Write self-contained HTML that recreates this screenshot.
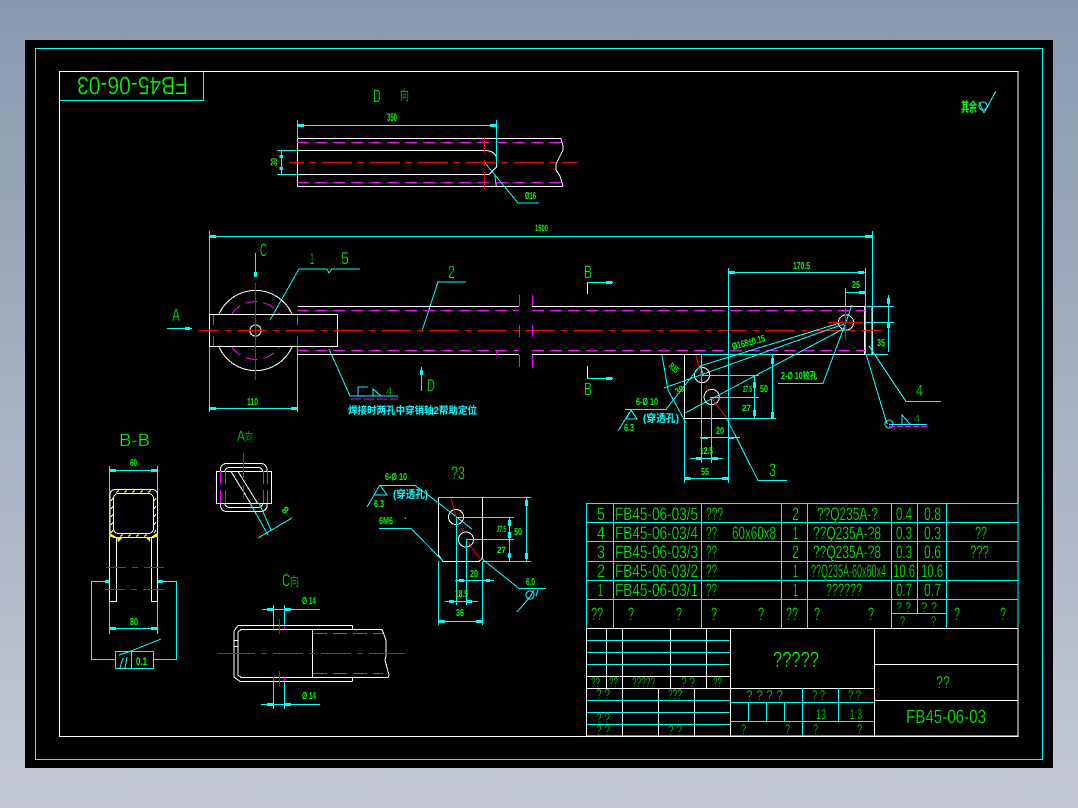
<!DOCTYPE html>
<html>
<head>
<meta charset="utf-8">
<style>
html,body{margin:0;padding:0;width:1078px;height:808px;overflow:hidden;background:#a8b1c1}
svg{display:block;position:absolute;left:0;top:0}
text{font-family:"Liberation Sans","Noto Sans CJK SC",sans-serif;fill:#00ff00;text-rendering:geometricPrecision;stroke:#000;stroke-width:.35}
.b{font-weight:bold;stroke:none}
.c{fill:#00ffff;font-weight:bold;stroke:none}
</style>
</head>
<body>
<svg width="1078" height="808" viewBox="0 0 1078 808" xmlns="http://www.w3.org/2000/svg">
<defs>
<linearGradient id="bg" x1="0" y1="0" x2="0" y2="1">
<stop offset="0" stop-color="#8a98ae"/>
<stop offset="1" stop-color="#c4c9d3"/>
</linearGradient>
</defs>
<rect width="1078" height="808" fill="url(#bg)"/>
<rect x="25" y="40" width="1028" height="728" fill="#000"/>

<g fill="none" shape-rendering="crispEdges" stroke-width="1">
<!-- frames -->
<rect x="35.5" y="48.5" width="1007" height="711" stroke="#00ffff"/>
<rect x="59.5" y="71.5" width="958.5" height="665" stroke="#fff"/>
<path d="M59.5 100.5H203.5V71.5" stroke="#00ffff"/>

<!-- D view -->
<g stroke="#fff">
<path d="M297.5 138.5H561M297.5 186.5H563M297.5 138.5V186.5M297.5 150.5H485Q496 151 496.5 159M297.5 174.5H489L496.5 167V159"/>
<path d="M561 138.5L563 146V150L560 156L556 164L556 170L560 176L563 186"/>
</g>
<path d="M297 142.5H563M297 182.5H563" stroke="#ff00ff" stroke-dasharray="12 6"/>
<path d="M496.5 182V186" stroke="#ff00ff"/>
<path d="M289 162.5H578" stroke="#ff0000" stroke-dasharray="30 6 6 6" stroke-dashoffset="15"/>
<path d="M484.5 137V153M484.5 160V166M484.5 172V189" stroke="#ff0000"/>
<g stroke="#00ffff">
<path d="M297.5 120V139M496.5 120V165M297 125.5H496.5M277 150.5H297M277 174.5H297M281.5 150V175M485 163L518 203H539M495 176L496 186"/>
</g>

<!-- main view -->
<g stroke="#00ffff">
<path d="M209.5 231V412M872.5 231V355M209.5 236.5H872.5M297.5 347V412M209.5 408.5H297M167 328.5H192M255.5 253V277M421.5 367V391"/>
<path d="M270 320L299 269H327L329 273L332 269H360M422 331L438 282H466M329 349L350 396H398"/>
<path d="M358 396V387H368M373 396L373 389L381 396"/>
</g>
<path d="M351 399H398" stroke="#ff00ff" stroke-dasharray="10 3"/>
<g stroke="#fff">
<rect x="209.5" y="314.5" width="128" height="32"/>
<path d="M297.5 306.5H519M297.5 354.5H519M532 306.5H872M532 354.5H872M864.5 306.5V354.5M872 306.5V354.5"/>
<path d="M219 314A40 40 0 0 1 292 314M219 347A40 40 0 0 0 292 347"/>
<circle cx="255.5" cy="330.5" r="5.6"/>
</g>
<path d="M231.7 314A29 29 0 0 1 279.3 314M231.7 347A29 29 0 0 0 279.3 347" stroke="#ff00ff" stroke-dasharray="12 6"/>
<path d="M213.5 315V325M213.5 336V346M297.5 315V325M297.5 336V346M297 310.5H519M532 310.5H865M297 350.5H519M532 350.5H865" stroke="#ff00ff" stroke-dasharray="12 6"/>
<path d="M519.5 295V306M532.5 295V306M519.5 355V367M532.5 355V367M496.5 350V355" stroke="#ff00ff"/>
<path d="M198 330.5H882" stroke="#ff0000" stroke-dasharray="30 6 6 6" stroke-dashoffset="9"/>
<path d="M255.5 283V380" stroke="#ff0000"/>
<path d="M519.5 325V337M532.5 325V337" stroke="#ff00ff"/>

<!-- right details -->
<g stroke="#fff">
<path d="M587.5 283V294M587.5 366V378M684.5 355V418.5H729"/>
<circle cx="846" cy="322.5" r="7.6"/>
<circle cx="702" cy="375" r="7.6"/>
<circle cx="711.7" cy="397" r="7.6"/>
</g>
<g stroke="#00ffff">
<path d="M587 282.5H613M587 378.5H613M728.5 268V483M728 272.5H865M865.5 268V355M684.5 419V483M684 478.5H728"/>
<path d="M845.5 288V326M845 292.5H865M865 306.5H894M865 322.5H894M888.5 295V352M866 354.5H888"/>
<path d="M843 322L700 366M844 324L664 388M845 328L685 413M700 366L704 376M664 388L669 386"/>
<path d="M662 355L668 390L686 423"/>
<path d="M778 383.5H823L846 322M845 325L852 305"/>
<path d="M869 346L906 401.5H941M866 354L887 424"/>
<circle cx="889" cy="424" r="4"/>
<path d="M889 424.5H927M902 424V415L910 424"/>
<path d="M700 375.5H759M710 397.5H759M728 418.5H776M700 354.5H775M754.5 375V418M772.5 354V418"/>
<path d="M701.5 355V463M711.5 397V463M700 437.5H740M690 458.5H723"/>
<path d="M725 415L758 480.5H787"/>
<path d="M618 431L631 410L637 419H626L631 410M625 409.5H666L700 366"/>
</g>
<path d="M889 426.5H927" stroke="#ff00ff" stroke-dasharray="6 2"/>
<path d="M695.7 355L702.3 378M706.7 385L707.7 392M711.7 398L726.7 418" stroke="#ff0000"/>
<path d="M845.5 307V340M828 322.5H863" stroke="#ff0000"/>

<!-- B-B -->
<g stroke="#00ffff">
<path d="M109.5 466V634M157.5 466V634M109 470.5H157M109 628.5H157"/>
<path d="M109 581.5H91.5V659.5H115M157 581.5H176.5V659.5H153"/>
<rect x="115.5" y="651.5" width="38" height="17"/>
<path d="M131.5 652V668M119 655L131 651L161 639M120 668L123 658M125 668L127 657"/>
</g>
<g stroke="#fff">
<rect x="110" y="489.5" width="47.5" height="48" rx="5"/>
<rect x="113.5" y="493.5" width="40" height="40" rx="5"/>
<path d="M109.5 537V601.5H116.5V537M151.5 537V601.5H157.5V537"/>
</g>
<path d="M116 492.5L119 490.5M124 492.5L127 490.5M132 492.5L135 490.5M140 492.5L143 490.5M148 492.5L151 490.5M111 501L113 498M111 509L113 506M111 517L113 514M111 525L113 522M111 533L113 530M154 501L156 498M154 509L156 506M154 517L156 514M154 525L156 522M154 533L156 530M120 536.5L123 534.5M128 536.5L131 534.5M136 536.5L139 534.5M144 536.5L147 534.5" stroke="#ffff00"/>
<path d="M110 533L116 537H110ZM157 533L151 537H157ZM117 537H123L118 542ZM150 537H145L150 542Z" fill="#ffff00" stroke="none"/>
<path d="M106 567.5H126M132 567.5H138M144 567.5H164M105 589.5H125M131 589.5H137M143 589.5H164" stroke="#ff0000"/>

<!-- A direction -->
<g stroke="#fff">
<rect x="220.5" y="463.5" width="46.5" height="48" rx="6"/>
<rect x="224.5" y="467.5" width="38.5" height="40" rx="5"/>
<rect x="216.5" y="471.5" width="55" height="32" fill="#000"/>
<path d="M231 471.5L251 504M238 471.5L258 504"/>
</g>
<path d="M250 503L268 535M259 503L271 530M258 538L292 518" stroke="#00ffff"/>
<path d="M243.5 453V478M243.5 485V498" stroke="#ff0000"/>
<path d="M220.5 471V484M225.5 471V484M263.5 471V484M267.5 471V484M220.5 490V503M225.5 490V503M263.5 490V503M267.5 490V503" stroke="#ff00ff"/>

<!-- C direction -->
<g stroke="#fff">
<path d="M352.5 625.5V629M352.5 677V681M238 625.5H352.5M234 631L238 625.5M234 631V677L240 681.5H352.5M238 632L241 629.5H382L386 640V656L385 660L389 675L388 677.5H241L238 675V632M234 640.5H238M234 646.5H238M312.5 629.5V677.5"/>
</g>
<path d="M313 633.5H383M313 673.5H383" stroke="#ff00ff" stroke-dasharray="14 6"/>
<path d="M273.5 626V629M284.5 626V629M273.5 677V681M284.5 677V681" stroke="#ff00ff"/>
<path d="M218 653.5H255M261 653.5H267M273 653.5H303M309 653.5H315M321 653.5H351M357 653.5H363M369 653.5H405M279.5 619V634M279.5 671V687" stroke="#ff0000"/>
<g stroke="#00ffff">
<path d="M273.5 605V625M284.5 605V625M273.5 681V709M284.5 681V709M262 609.5H320M261 704.5H320"/>
</g>

<!-- detail 3 -->
<g stroke="#fff">
<path d="M438.5 497V555L443 561.5H479L482.5 558V497"/>
<circle cx="456" cy="517" r="7.5"/>
<circle cx="466" cy="539.5" r="7.5"/>
</g>
<g stroke="#00ffff">
<path d="M438 497.5H531M482 561.5H531M526.5 497V561M456 517.5H514M466 539.5H514M509.5 517V561"/>
<path d="M456.5 517V605M466.5 539V605M455 580.5H494M445 601.5H478M438.5 561V625M482.5 561V625M438 621.5H482"/>
<path d="M367 507L380 485L387 495H374L380 485M380 485.5H415L432 498L472 529"/>
<path d="M379 528.5H411L443 561M481 558L519 588.5H546M534 590L530 597L517 612M538 590L536 596"/>
<circle cx="530" cy="595" r="4"/>
</g>
<path d="M451 498L456 517M461 528L463 532M467 541L481 560" stroke="#ff0000"/>

<!-- arrow blobs -->
<g fill="#00ffff" stroke="none">
<path d="M297 124H304V127H297ZM490 124H496V127H490ZM279.5 155H283V158H279.5ZM279.5 167H283V170H279.5Z"/>
<path d="M210 235H216V238H210ZM291 407H297V410H291ZM210 407H216V410H210ZM185 327H190V330H185ZM254 272H257V277H254ZM420 370H423V375H420ZM865 235H872V238H865Z"/>
<path d="M606 281H612V284H606ZM606 377H612V380H606ZM729 271H735V274H729ZM858 271H864V274H858ZM859 291H865V294H859ZM887 298H890V304H887ZM887 322H890V328H887Z"/>
<path d="M753 382H756V388H753ZM753 410H756V416H753ZM771 358H774V364H771ZM771 412H774V418H771ZM702 437H708V439H702ZM728 437H734V439H728ZM685 477H691V480H685ZM722 477H728V480H722ZM696 457H702V460H696ZM712 457H718V460H712Z"/>
<path d="M110 469H116V472H110ZM151 469H157V472H151ZM110 627H116V630H110ZM151 627H157V630H151ZM105 580H109V583H105ZM158 580H163V583H158Z"/>
<path d="M267 608H273V611H267ZM285 608H291V611H285ZM267 703H273V706H267ZM285 703H291V706H285Z"/>
<path d="M525 500H528V506H525ZM525 553H528V559H525ZM508 520H511V526H508ZM508 532H511V538H508ZM508 553H511V558H508ZM459 579H464V582H459ZM486 579H490V582H486ZM449 600H454V603H449ZM467 600H472V603H467ZM439 620H445V623H439ZM476 620H482V623H476Z"/>
</g>

<!-- parts table -->
<g stroke="#00ffff">
<path d="M586.5 503.5H1018M586.5 522.5H1018M586.5 541.5H1018M586.5 561.5H1018M586.5 580.5H1018M586.5 599.5H1018M891 613.5H946"/>
<path d="M586.5 503V628M613.5 503V628M701.5 503V628M781.5 503V628M807.5 503V628M891.5 503V628M917.5 503V613M946.5 503V628M1018 503V628"/>
</g>
<!-- title block -->
<g stroke="#fff">
<path d="M586.5 628.5H1018M586.5 688.5H874M586.5 676.5H730M586.5 736H1018M874 664.5H1018M874 700.5H1018"/>
<path d="M586.5 628V736M606.5 628V688M622.5 628V736M670.5 628V688M706.5 628V688M730.5 628V736M658.5 688V736M694.5 688V736M874.5 628V736M1018 628V736"/>
</g>
<g stroke="#00ffff">
<path d="M586.5 640.5H730M586.5 652.5H730M586.5 664.5H730M586.5 700.5H730M586.5 712.5H730M586.5 724.5H730M730 702.5H874M730 721.5H874"/>
<path d="M802.5 688V736M838.5 688V721M748.5 702V721M766.5 702V721M784.5 702V721"/>
</g>
</g>

<!-- check mark -->
<g fill="none" stroke="#00ffff" shape-rendering="crispEdges">
<circle cx="983" cy="106" r="4"/>
<path d="M984 113L996 91M979 102L984 113"/>
</g>

<!-- text -->
<text x="77" y="95" font-size="25" textLength="111" lengthAdjust="spacingAndGlyphs" transform="rotate(180 132.5 86)">FB45-06-03</text>
<text x="373" y="102" font-size="18" textLength="8" lengthAdjust="spacingAndGlyphs">D</text>
<text x="400" y="100" font-size="14" textLength="9" lengthAdjust="spacingAndGlyphs">向</text>
<text class="b" x="387" y="121" font-size="11" textLength="10" lengthAdjust="spacingAndGlyphs">350</text>
<text class="b" x="0" y="0" font-size="9" textLength="8" lengthAdjust="spacingAndGlyphs" transform="translate(277 166) rotate(-90)">30</text>
<text class="b" x="525" y="199" font-size="10" textLength="11" lengthAdjust="spacingAndGlyphs">Ø16</text>
<text class="b" x="961" y="112" font-size="14" textLength="16" lengthAdjust="spacingAndGlyphs">其余</text>

<text class="b" x="535" y="231" font-size="9" textLength="13" lengthAdjust="spacingAndGlyphs">1500</text>
<text x="172" y="321" font-size="18" textLength="8" lengthAdjust="spacingAndGlyphs">A</text>
<text x="260" y="256" font-size="18" textLength="7" lengthAdjust="spacingAndGlyphs">C</text>
<text x="310" y="264" font-size="16" textLength="4" lengthAdjust="spacingAndGlyphs">1</text>
<text x="341" y="264" font-size="17" textLength="8" lengthAdjust="spacingAndGlyphs">5</text>
<text x="448" y="278" font-size="18" textLength="7" lengthAdjust="spacingAndGlyphs">2</text>
<text x="427" y="391" font-size="17" textLength="8" lengthAdjust="spacingAndGlyphs">D</text>
<text class="b" x="247" y="405" font-size="10" textLength="11" lengthAdjust="spacingAndGlyphs">110</text>
<text x="386" y="395" font-size="11" textLength="6" lengthAdjust="spacingAndGlyphs">4</text>
<text class="c" x="348" y="414" font-size="10.5" textLength="129" lengthAdjust="spacingAndGlyphs">焊接时两孔中穿销轴2帮助定位</text>

<text x="584" y="278" font-size="18" textLength="8" lengthAdjust="spacingAndGlyphs">B</text>
<text x="584" y="395" font-size="18" textLength="8" lengthAdjust="spacingAndGlyphs">B</text>
<text class="b" x="793" y="269" font-size="10" textLength="17" lengthAdjust="spacingAndGlyphs">170.5</text>
<text class="b" x="852" y="288" font-size="10" textLength="8" lengthAdjust="spacingAndGlyphs">25</text>
<text class="b" x="877" y="346" font-size="10" textLength="8" lengthAdjust="spacingAndGlyphs">35</text>
<text x="916" y="396" font-size="16" textLength="7" lengthAdjust="spacingAndGlyphs">4</text>
<text x="914" y="422" font-size="10" textLength="6" lengthAdjust="spacingAndGlyphs">4</text>
<text x="769" y="476" font-size="18" textLength="7" lengthAdjust="spacingAndGlyphs">3</text>
<text class="b" x="0" y="0" font-size="10" textLength="34" lengthAdjust="spacingAndGlyphs" transform="translate(733 350) rotate(-15)">Ø168±0.15</text>
<text class="b" x="781" y="379" font-size="10" textLength="36" lengthAdjust="spacingAndGlyphs">2-Ø 10铰孔</text>
<text class="b" x="0" y="0" font-size="9" textLength="10" lengthAdjust="spacingAndGlyphs" transform="translate(668 367) rotate(40)">R35</text>
<text class="b" x="0" y="0" font-size="9" textLength="9" lengthAdjust="spacingAndGlyphs" transform="translate(677 395) rotate(-30)">30</text>
<text class="b" x="743" y="392" font-size="9" textLength="9" lengthAdjust="spacingAndGlyphs">27.5</text>
<text class="b" x="742" y="411" font-size="9" textLength="9" lengthAdjust="spacingAndGlyphs">27</text>
<text class="b" x="760" y="392" font-size="10" textLength="8" lengthAdjust="spacingAndGlyphs">50</text>
<text class="b" x="716" y="434" font-size="10" textLength="8" lengthAdjust="spacingAndGlyphs">20</text>
<text class="b" x="700" y="454" font-size="10" textLength="13" lengthAdjust="spacingAndGlyphs">12.5</text>
<text class="b" x="701" y="475" font-size="10" textLength="8" lengthAdjust="spacingAndGlyphs">55</text>
<text class="b" x="636" y="405" font-size="10" textLength="22" lengthAdjust="spacingAndGlyphs">6-Ø 10</text>
<text class="c" x="643" y="422" font-size="11" textLength="36" lengthAdjust="spacingAndGlyphs">(穿透孔)</text>
<text class="b" x="624" y="431" font-size="10" textLength="10" lengthAdjust="spacingAndGlyphs">6.3</text>

<text x="119" y="446" font-size="18" textLength="31" lengthAdjust="spacingAndGlyphs">B-B</text>
<text class="b" x="130" y="466" font-size="10" textLength="7" lengthAdjust="spacingAndGlyphs">60</text>
<text class="b" x="130" y="625" font-size="10" textLength="8" lengthAdjust="spacingAndGlyphs">80</text>
<text class="b" x="136" y="665" font-size="11" textLength="11" lengthAdjust="spacingAndGlyphs">0.1</text>
<text x="237" y="441" font-size="15" textLength="8" lengthAdjust="spacingAndGlyphs">A</text>
<text x="245" y="441" font-size="12" textLength="8" lengthAdjust="spacingAndGlyphs">向</text>
<text class="b" x="0" y="0" font-size="10" transform="translate(281 511) rotate(40)">8</text>
<text x="282" y="586" font-size="17" textLength="8" lengthAdjust="spacingAndGlyphs">C</text>
<text x="290" y="586" font-size="13" textLength="9" lengthAdjust="spacingAndGlyphs">向</text>
<text class="b" x="302" y="604" font-size="10" textLength="14" lengthAdjust="spacingAndGlyphs">Ø 14</text>
<text class="b" x="302" y="699" font-size="10" textLength="14" lengthAdjust="spacingAndGlyphs">Ø 14</text>

<text x="451" y="479" font-size="18" textLength="14" lengthAdjust="spacingAndGlyphs">?3</text>
<text class="b" x="385" y="480" font-size="10" textLength="22" lengthAdjust="spacingAndGlyphs">6-Ø 10</text>
<text class="c" x="393" y="498" font-size="11" textLength="35" lengthAdjust="spacingAndGlyphs">(穿透孔)</text>
<text class="b" x="374" y="507" font-size="10" textLength="10" lengthAdjust="spacingAndGlyphs">6.3</text>
<text class="b" x="379" y="524" font-size="10" textLength="14" lengthAdjust="spacingAndGlyphs">6M6</text>
<text class="b" x="404" y="519" font-size="10">.</text>
<text class="b" x="497" y="532" font-size="9" textLength="9" lengthAdjust="spacingAndGlyphs">27.5</text>
<text class="b" x="497" y="553" font-size="9" textLength="9" lengthAdjust="spacingAndGlyphs">27</text>
<text class="b" x="514" y="535" font-size="10" textLength="8" lengthAdjust="spacingAndGlyphs">50</text>
<text class="b" x="470" y="577" font-size="10" textLength="8" lengthAdjust="spacingAndGlyphs">20</text>
<text class="b" x="455" y="597" font-size="10" textLength="13" lengthAdjust="spacingAndGlyphs">18.5</text>
<text class="b" x="456" y="616" font-size="10" textLength="8" lengthAdjust="spacingAndGlyphs">36</text>
<text class="b" x="526" y="585" font-size="10" textLength="9" lengthAdjust="spacingAndGlyphs">6.0</text>

<!-- parts table text -->
<g font-size="18">
<text x="597" y="520" textLength="8" lengthAdjust="spacingAndGlyphs">5</text>
<text x="615" y="520" textLength="83" lengthAdjust="spacingAndGlyphs">FB45-06-03/5</text>
<text x="706" y="520" textLength="17" lengthAdjust="spacingAndGlyphs">???</text>
<text x="792" y="520" textLength="7" lengthAdjust="spacingAndGlyphs">2</text>
<text x="817" y="520" textLength="61" lengthAdjust="spacingAndGlyphs">??Q235A-?</text>
<text x="896" y="520" textLength="16" lengthAdjust="spacingAndGlyphs">0.4</text>
<text x="924" y="520" textLength="17" lengthAdjust="spacingAndGlyphs">0.8</text>

<text x="597" y="539" textLength="8" lengthAdjust="spacingAndGlyphs">4</text>
<text x="615" y="539" textLength="83" lengthAdjust="spacingAndGlyphs">FB45-06-03/4</text>
<text x="706" y="539" textLength="11" lengthAdjust="spacingAndGlyphs">??</text>
<text x="732" y="539" textLength="44" lengthAdjust="spacingAndGlyphs">60x60x8</text>
<text x="793" y="539" textLength="5" lengthAdjust="spacingAndGlyphs">1</text>
<text x="813" y="539" textLength="68" lengthAdjust="spacingAndGlyphs">??Q235A-?8</text>
<text x="896" y="539" textLength="16" lengthAdjust="spacingAndGlyphs">0.3</text>
<text x="924" y="539" textLength="17" lengthAdjust="spacingAndGlyphs">0.3</text>
<text x="975" y="539" textLength="12" lengthAdjust="spacingAndGlyphs">??</text>

<text x="597" y="558" textLength="8" lengthAdjust="spacingAndGlyphs">3</text>
<text x="615" y="558" textLength="83" lengthAdjust="spacingAndGlyphs">FB45-06-03/3</text>
<text x="706" y="558" textLength="11" lengthAdjust="spacingAndGlyphs">??</text>
<text x="792" y="558" textLength="7" lengthAdjust="spacingAndGlyphs">2</text>
<text x="813" y="558" textLength="68" lengthAdjust="spacingAndGlyphs">??Q235A-?8</text>
<text x="896" y="558" textLength="16" lengthAdjust="spacingAndGlyphs">0.3</text>
<text x="924" y="558" textLength="17" lengthAdjust="spacingAndGlyphs">0.6</text>
<text x="970" y="558" textLength="19" lengthAdjust="spacingAndGlyphs">???</text>

<text x="597" y="577" textLength="8" lengthAdjust="spacingAndGlyphs">2</text>
<text x="615" y="577" textLength="83" lengthAdjust="spacingAndGlyphs">FB45-06-03/2</text>
<text x="706" y="577" textLength="11" lengthAdjust="spacingAndGlyphs">??</text>
<text x="793" y="577" textLength="5" lengthAdjust="spacingAndGlyphs">1</text>
<text x="811" y="577" textLength="75" lengthAdjust="spacingAndGlyphs">??Q235A-60x60x4</text>
<text x="893" y="577" textLength="22" lengthAdjust="spacingAndGlyphs">10.6</text>
<text x="921" y="577" textLength="22" lengthAdjust="spacingAndGlyphs">10.6</text>

<text x="598" y="596" textLength="5" lengthAdjust="spacingAndGlyphs">1</text>
<text x="615" y="596" textLength="83" lengthAdjust="spacingAndGlyphs">FB45-06-03/1</text>
<text x="706" y="596" textLength="11" lengthAdjust="spacingAndGlyphs">??</text>
<text x="793" y="596" textLength="5" lengthAdjust="spacingAndGlyphs">1</text>
<text x="826" y="596" textLength="36" lengthAdjust="spacingAndGlyphs">??????</text>
<text x="896" y="596" textLength="16" lengthAdjust="spacingAndGlyphs">0.7</text>
<text x="924" y="596" textLength="17" lengthAdjust="spacingAndGlyphs">0.7</text>

<text x="591" y="620" textLength="12" lengthAdjust="spacingAndGlyphs">??</text>
<text x="628" y="620" textLength="6" lengthAdjust="spacingAndGlyphs">?</text>
<text x="676" y="620" textLength="6" lengthAdjust="spacingAndGlyphs">?</text>
<text x="711" y="620" textLength="6" lengthAdjust="spacingAndGlyphs">?</text>
<text x="758" y="620" textLength="6" lengthAdjust="spacingAndGlyphs">?</text>
<text x="786" y="620" textLength="12" lengthAdjust="spacingAndGlyphs">??</text>
<text x="814" y="620" textLength="6" lengthAdjust="spacingAndGlyphs">?</text>
<text x="868" y="620" textLength="6" lengthAdjust="spacingAndGlyphs">?</text>
<text x="954" y="620" textLength="6" lengthAdjust="spacingAndGlyphs">?</text>
<text x="1000" y="620" textLength="6" lengthAdjust="spacingAndGlyphs">?</text>
</g>
<g font-size="14">
<text x="896" y="612" textLength="15" lengthAdjust="spacingAndGlyphs">? ?</text>
<text x="921" y="612" textLength="16" lengthAdjust="spacingAndGlyphs">? ?</text>
<text x="900" y="626" textLength="5" lengthAdjust="spacingAndGlyphs">?</text>
<text x="931" y="626" textLength="5" lengthAdjust="spacingAndGlyphs">?</text>

<text x="591" y="687" textLength="9" lengthAdjust="spacingAndGlyphs">??</text>
<text x="609" y="687" textLength="9" lengthAdjust="spacingAndGlyphs">??</text>
<text x="632" y="687" textLength="23" lengthAdjust="spacingAndGlyphs">?????</text>
<text x="681" y="687" textLength="14" lengthAdjust="spacingAndGlyphs">? ?</text>
<text x="713" y="687" textLength="9" lengthAdjust="spacingAndGlyphs">??</text>
<text x="596" y="699" textLength="14" lengthAdjust="spacingAndGlyphs">? ?</text>
<text x="668" y="699" textLength="14" lengthAdjust="spacingAndGlyphs">???</text>
<text x="596" y="723" textLength="14" lengthAdjust="spacingAndGlyphs">? ?</text>
<text x="596" y="735" textLength="14" lengthAdjust="spacingAndGlyphs">? ?</text>
<text x="668" y="735" textLength="14" lengthAdjust="spacingAndGlyphs">? ?</text>
<text x="746" y="700" textLength="37" lengthAdjust="spacingAndGlyphs">? ? ? ?</text>
<text x="812" y="700" textLength="13" lengthAdjust="spacingAndGlyphs">? ?</text>
<text x="848" y="700" textLength="13" lengthAdjust="spacingAndGlyphs">? ?</text>
<text x="741" y="734" textLength="5" lengthAdjust="spacingAndGlyphs">?</text>
<text x="785" y="734" textLength="5" lengthAdjust="spacingAndGlyphs">?</text>
<text x="813" y="734" textLength="5" lengthAdjust="spacingAndGlyphs">?</text>
<text x="857" y="734" textLength="5" lengthAdjust="spacingAndGlyphs">?</text>
<text x="816" y="719" textLength="10" lengthAdjust="spacingAndGlyphs">13</text>
<text x="850" y="719" textLength="12" lengthAdjust="spacingAndGlyphs">1:3</text>
</g>
<text x="773" y="667" font-size="22" textLength="46" lengthAdjust="spacingAndGlyphs">?????</text>
<text x="936" y="688" font-size="17" textLength="14" lengthAdjust="spacingAndGlyphs">??</text>
<text x="906" y="723" font-size="19" textLength="80" lengthAdjust="spacingAndGlyphs">FB45-06-03</text>
</svg>
</body>
</html>
